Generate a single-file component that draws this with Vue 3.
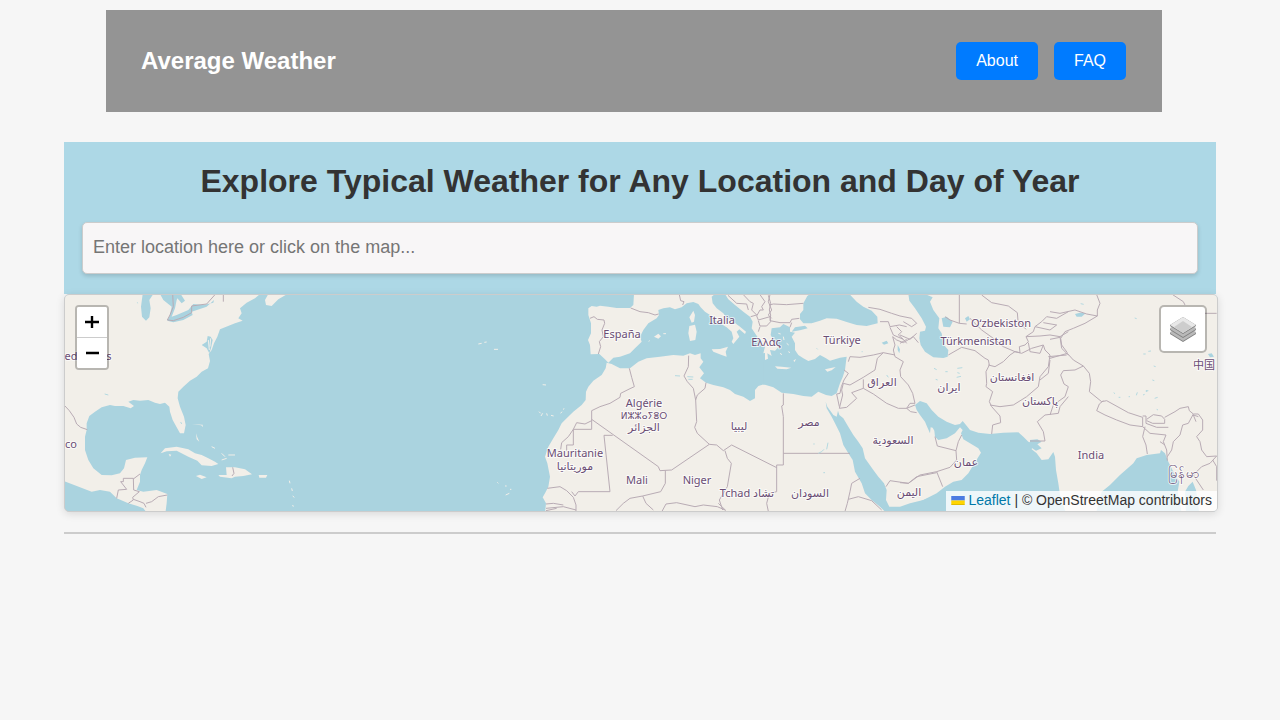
<script setup>
import { ref } from 'vue'

const query = ref('')

const labels = [
  { x: 71, y: 360, text: 'ed' },
  { x: 109, y: 360, text: 's' },
  { x: 71, y: 448, text: 'co' },
  { x: 622, y: 338, text: 'España' },
  { x: 722, y: 324, text: 'Italia' },
  { x: 766, y: 346, text: 'Ελλάς' },
  { x: 842, y: 344, text: 'Türkiye' },
  { x: 1001, y: 327, text: 'Oʻzbekiston' },
  { x: 976, y: 345, text: 'Türkmenistan' },
  { x: 1204, y: 369, text: '中国' },
  { x: 882, y: 386, text: 'العراق' },
  { x: 949, y: 391, text: 'ایران' },
  { x: 1012, y: 381, text: 'افغانستان' },
  { x: 1040, y: 405, text: 'پاکستان' },
  { x: 644, y: 407, text: 'Algérie' },
  { x: 644, y: 419, text: 'ⵍⵣⵣⴰⵢⴻⵔ', kind: 'narrow' },
  { x: 644, y: 431, text: 'الجزائر' },
  { x: 739, y: 430, text: 'ليبيا' },
  { x: 809, y: 426, text: 'مصر' },
  { x: 893, y: 444, text: 'السعودية' },
  { x: 966, y: 466, text: 'عمان' },
  { x: 575, y: 457, text: 'Mauritanie' },
  { x: 575, y: 470, text: 'موريتانيا' },
  { x: 637, y: 484, text: 'Mali' },
  { x: 697, y: 484, text: 'Niger' },
  { x: 747, y: 497, text: 'Tchad تشاد' },
  { x: 810, y: 497, text: 'السودان' },
  { x: 909, y: 496, text: 'اليمن' },
  { x: 1091, y: 459, text: 'India' },
  { x: 1184, y: 478, text: 'မြန်မာ', kind: 'wide' }
]
</script>

<template>
  <div class="page">
    <header class="top">
      <div class="brand">Average Weather</div>
      <nav class="links">
        <a href="#about">About</a>
        <a href="#faq">FAQ</a>
      </nav>
    </header>

    <main class="main">
      <section class="search">
        <h1>Explore Typical Weather for Any Location and Day of Year</h1>
        <input
          v-model="query"
          type="text"
          aria-label="Location"
          placeholder="Enter location here or click on the map..."
        />
      </section>

      <div class="map">
        <svg class="tiles" viewBox="65 295 1152 216" preserveAspectRatio="xMidYMid slice" role="img" aria-label="World map">
          <!-- North America -->
          <g transform="translate(60 290) scale(.33333)">
            <path class="land" d="M12 12H600L585 25 560 38 540 55 545 70 535 85 548 92 525 100 510 106 480 118 472 140 462 160 455 180 446 192 450 213 444 235 425 245 410 260 390 272 370 290 355 305 353 325 360 350 372 380 377 405 372 430 360 430 350 412 338 390 330 365 328 350 315 338 300 342 285 338 265 330 240 332 220 330 205 335 222 348 212 355 190 348 165 348 150 345 125 352 105 365 88 378 80 400 80 420 75 440 75 480 85 510 100 535 125 555 155 556 180 550 192 535 198 510 225 503 262 502 255 520 245 540 240 555 240 575 230 600 250 605 290 600 322 612 320 640 316 670H262L250 655 232 648 205 640 170 625 150 605 120 600 95 605 60 592 12 573Z" />
            <path class="land" d="M625 12H682L655 28 635 48 618 45 615 30Z" />
            <path class="land" d="M302 490 315 475 350 470 385 478 405 490 425 495 445 505 465 515 475 522 455 528 425 526 412 512 385 500 350 482 320 484ZM475 555 500 555 498 532 525 532 555 538 576 553 550 558 525 560 515 565 480 560ZM408 558 420 554 440 562 425 567ZM596 555H622L618 563H598ZM326 492 334 494 330 500ZM408 430 412 442 418 455 410 448ZM396 403 428 404 428 412 424 406Z" />
            <path class="isles" d="M455 470 465 475M485 490 495 500M505 495 525 495M485 510 500 505M688 572 690 580M695 595 697 603M698 618 703 622M698 645 700 650" />
            <path class="water" d="M248 12 243 50 246 80 258 92 268 82 272 55 268 30 280 12ZM300 12 310 30 335 50 330 75 322 92 340 97 370 90 398 75 395 65 440 50 462 30 460 38 430 45 400 42 385 60 350 75 335 80 345 55 350 30 352 25 365 40 375 32 362 12ZM425 165 440 155 443 138 452 140 458 150 453 175 448 190 440 175Z" />
            <path class="isles" d="M445 150 448 180M452 145 450 170" />
            <path class="border" d="M338 12 340 50 330 75 322 90 340 92 370 82 395 68 395 48 440 42 465 14M490 12V35M15 348 28 362 42 382 50 402 62 412 82 419M220 565H190V575H182L200 598 175 600 170 625M220 565 221 600M220 567 240 552M221 600 238 605 218 622 220 630 205 640M220 628 240 635 252 640 258 652M258 640 275 635 295 620 322 615M518 532 522 550 516 558" />
            <path class="lakes" d="M362 396 365 402M134 312 145 315M233 40 232 37" />
          </g>
          <!-- Atlantic isles -->
          <g transform="translate(440 290) scale(.33333)">
            <path class="isles" d="M115 162 125 160M133 157 140 156M162 178 174 178M308 284 318 285M297 365 302 370M303 378 308 370M320 370 322 377M333 376 341 378M362 370 366 365M369 358 373 356M172 577 175 580M195 588 200 588M210 598 214 598M197 615 208 610" />
          </g>
          <!-- Western Europe and North Africa -->
          <g transform="translate(580 290) scale(.33333)">
            <path class="land" d="M25 55 35 48 50 50 60 47 85 50 110 54 150 54 160 45 162 12H405L395 20 398 40 410 55 430 70 440 85 460 95 480 110 498 125 495 132 478 118 470 125 478 140 468 152 460 162 455 155 460 145 455 125 440 112 420 100 400 88 390 75 375 65 362 52 355 42 340 36 320 40 305 52 285 58 270 52 250 55 235 60 237 75 230 85 205 100 190 120 180 140 185 155 165 175 150 190 120 200 100 203 85 218 75 208 58 192 32 193 30 165 24 150 33 130 33 100 25 75Z" />
            <path class="land" d="M435 12 445 28 465 45 490 65 510 80 518 95 515 115 525 130 535 145 545 160 555 170 550 190 558 188 568 205 580 203 600 170V12Z" />
            <path class="land" d="M340 62 345 75 342 95 335 98 328 82ZM328 108 345 104 350 125 346 150 330 153 325 130ZM395 178 420 177 444 170 437 185 440 200 425 195 400 185ZM222 140 235 131 243 139 235 146Z" />
            <path class="isles" d="M206 154 209 152M250 131 258 131" />
            <path class="land" d="M80 218 95 222 120 235 150 235 175 215 200 205 240 200 280 195 310 197 330 190 345 195 362 190 362 205 370 215 358 232 372 250 360 265 378 278 400 285 430 292 450 300 465 312 490 320 510 333 525 325 525 300 535 288 555 282 575 288 605 294V670H-105L-102 640-112 622-105 610-95 590-90 560-98 520-105 500-95 470-80 445-65 420-55 400-40 385-20 365 5 345 17 330 18 305 25 290 40 272 65 255 77 235Z" />
          </g>
          <!-- Middle East, Caucasus, Horn -->
          <g transform="translate(740 290) scale(.33333)">
            <path class="land" d="M75 12H1435V670H75Z" />
            <path class="water" d="M95 115 120 112 130 102 150 112 150 125 165 128 155 140 165 160 165 180 175 195 190 205 205 213 225 207 240 195 258 205 270 212 285 208 300 203 320 200 318 215 315 240 308 262 300 280 290 310 275 318 258 315 235 305 215 320 190 318 160 312 125 308 100 292 75 284 70 284V212L84 206 82 190 95 198 90 180 105 182 115 172 100 150 92 135Z" />
            <path class="water" d="M190 60 190 40 202 18 210 12H328L350 35 370 50 395 62 412 80 413 100 380 108 350 105 320 96 290 86 260 85 240 92 215 100 190 100 180 88 180 72ZM165 112 195 107 203 115 180 121 155 125Z" />
            <path class="land" d="M105 229 125 230 154 233 140 238 112 236ZM255 238 287 231 275 241 262 245ZM160 212 168 206 164 216Z" />
            <path class="isles" d="M115 130 122 132M130 140 132 150M140 160 146 165M120 190 126 194M145 185 150 188" />
            <path class="water" d="M257 335 262 350 280 375 290 380 294 362 298 375 310 385 325 410 340 435 355 455 368 475 375 505 400 540 415 560 432 580 440 600 438 630 448 650 480 650 510 640 550 630 605 610V670H440L420 650 395 630 375 610 365 580 345 545 338 510 325 490 310 465 300 430 285 400 275 380 260 355Z" />
            <path class="border" d="M130 310V345L125 348 130 380V525H110V605L88 610 80 640 85 664M130 490H330M88 45 100 42 140 44 165 42 190 40M90 92 120 98 150 98 155 88 178 85M155 98 150 112M85 16 92 40 88 60 92 75 90 92M385 52 420 58 455 70 480 78 515 85 530 100 515 110 490 95M420 95 445 95 450 110 478 105 500 110M450 112 460 135 490 148M470 110 485 125 475 135 490 148 500 160M458 140 470 150 490 158 520 140 535 158M458 140 465 165 460 180 465 200 490 215 480 240 482 260 505 285 518 310 525 340M325 215 330 200 360 202 400 195 430 188 465 195M430 188 412 205 405 240 370 262 330 285 310 280M310 280 305 300 308 315 298 355M370 268V295L335 308 350 325 320 352 298 355M370 295 400 312 440 340 475 355 500 355 510 340 525 340M500 355 512 365 530 368M312 240 325 250 312 270 304 290 300 310 290 312 298 350M438 590 450 572 505 580 530 560 590 548M360 565 335 580 330 605 322 640 315 664M325 628 355 620 395 632 425 660" />
            <path class="water" d="M425 158 440 152 445 160 432 164ZM473 165 480 178 478 190 473 180Z" />
            <path class="lakes" d="M235 490 245 485 252 478M260 478 264 458M220 462 224 462M250 548 255 548M365 185 368 185M230 175 233 178M440 255 445 262" />
          </g>
          <!-- Borders of Western Europe, the Balkans and North Africa -->
          <g transform="translate(580 290) scale(.33333)">
            <path class="border" d="M30 85 42 80 52 88 72 90 74 100 66 120 70 140 58 155 62 170 55 192M152 54 180 65 205 68 225 75 236 72M298 14 302 32 312 35 308 45M148 235 155 262 163 290 150 296 122 310 120 322 90 340 60 350 35 362V418H-20V465H-40V482M35 392 15 402-10 398-20 418-35 440-55 458-58 478M35 388 235 530 240 542 275 540 388 463M326 197 325 230 312 258 322 275 340 295 347 330 350 395 344 412 352 430 388 463 410 465 430 482 455 465 590 533M378 278 375 295 352 315 347 330M72 436H98M72 436 90 605H-5L-15 618-25 605M256 542V580L242 605 188 618 198 640 220 660M188 618 150 625 130 640 108 662M246 664 258 642 290 638 345 650 370 645 412 650 435 660M435 482 442 505 454 520 442 590 418 630 428 660M415 640 438 662M-98 595-60 590-40 602-20 622-12 645V664M-102 642-80 640-50 645M-102 655-50 650-12 660M-102 662-70 655M444 16 470 40 500 42 505 60M490 14 510 35 520 40 515 60 530 75 512 80M540 14 555 35 545 50 550 60 540 60 530 78 535 90 570 80 572 95 560 108 540 108 535 92M570 14 565 35 575 60 565 75 575 85M540 110 535 125" />
            <path class="lakes" d="M285 257 300 258M322 260 340 261M325 268 338 268" />
          </g>
          <!-- Persia, Central Asia, Arabian Sea -->
          <g transform="translate(900 290) scale(.33333)">
            <path class="water" d="M25 12 28 32 45 55 65 85 78 110 75 122 60 125 58 145 62 165 75 185 100 202 130 204 143 200 145 180 132 165 128 148 125 130 115 115 118 85 100 60 90 35 98 22 75 12ZM125 85 140 80 158 95 150 112 130 110ZM195 85 205 78 210 88 200 95Z" />
            <path class="water" d="M45 345 60 333 80 340 95 360 115 380 140 395 165 405 180 402 188 393 198 405 210 420 235 428 270 432 310 428 355 427 370 440 385 455 400 460 395 478 410 490 425 510 445 508 460 486 465 500 468 540 475 580 480 615 498 670H0V655L30 648 70 630 110 610 135 590 160 575 185 570 205 550 220 525 243 488 235 475 210 460 190 448 183 430 188 420 180 412 165 430 140 445 115 450 105 440 103 422 98 413 92 412 90 430 82 412 75 395 60 375 50 360Z" />
            <path class="water" d="M390 450 412 448 425 455 412 463 425 475 408 482 390 470Z" />
            <path class="border" d="M178 14V100L200 102M178 100 150 90 135 80M145 195 185 172 225 182 255 205 265 210 268 225 258 245 260 280 258 290 278 305 268 335 275 350 300 378 302 398 278 405 275 432M245 15 275 38 325 48 352 68 354 92 378 118M210 85 245 120 280 145 310 170 345 185M265 225 285 230 310 215 330 195 345 185 365 190 395 175 430 165 435 180 450 195 445 230 420 260 415 290 380 320 340 345 300 350 270 345M345 185 360 188 358 170 375 165 385 155 378 140 400 125 405 110 425 95 440 80 470 85 505 65M378 140 420 138 450 135 480 140 505 125M385 158 390 185 420 190 430 165M405 110 450 120 470 105 430 98M445 200 500 195M480 140 485 175 505 195M450 210 445 250 420 270M390 453H435L430 425 412 395 435 375 475 370 480 350 505 320M105 440 112 468 168 482 175 455 185 435M168 482 170 510 150 532 110 545 60 555 25 580 0 578M110 545 128 590M20 355 45 345M0 135 30 148 50 130M0 160 20 148" />
            <path class="lakes" d="M102 235 110 239M136 245 143 245M172 235 187 233M170 262 183 259M107 268 113 270M172 248 179 250" />
          </g>
          <!-- India, Himalaya, Bay of Bengal -->
          <g transform="translate(1050 290) scale(.33333)">
            <path class="water" d="M155 605 180 585 210 555 250 520 260 505 290 495 330 490 333 480 345 490 355 515 370 545 388 575 383 605 395 670H138ZM405 605 415 588 428 575 438 600 448 670H408ZM75 72 90 68 107 70 95 80 80 80ZM474 192 485 190 492 200 480 202Z" />
            <path class="border" d="M140 14 150 40 142 60 142 78 105 100 70 115 45 125 32 145 35 165 52 188M0 65 30 70 75 60 110 72 142 78M0 148 30 142M0 205 52 190 70 210 100 228 118 250 122 275 118 305 155 335M100 228 75 240 40 242 32 255 42 282 55 290 45 320 10 345 0 375M155 335 170 332 235 368 278 382V410L240 405 200 390 165 375 140 362 148 342 160 332M278 378H288V400L320 412 355 412M290 388 310 374 335 378 344 388V400H308L290 392M344 382 375 365 390 355 415 350 418 362 430 372 445 372 458 390V420L440 440 450 455 455 480 470 500 500 498M430 372 415 400 398 405 390 435 370 455 365 480 352 500M285 410 278 440 288 465 292 492M278 410 300 430 348 435 340 455 350 480 352 512M330 455 345 465M500 498 480 520 455 530 430 555 460 600M488 510 500 530V572M368 14 400 35 405 45M440 70H500M438 395 430 375 445 380" />
            <path class="lakes" d="M254 84 260 86M92 41 101 43M295 184 303 183M280 192 287 192M287 303 295 302M290 300V306M314 325 323 322M279 315 284 313M262 307 259 316M236 320 240 320M191 308 195 311M206 322 211 322M307 270 313 272M311 228 317 230M320 358 324 360" />
          </g>
          <g class="labels">
            <text v-for="l in labels" :key="l.text" :class="l.kind" :x="l.x" :y="l.y">{{ l.text }}</text>
          </g>
        </svg>

        <div class="zoom">
          <button type="button" aria-label="Zoom in">
            <svg viewBox="0 0 14 14"><path d="M0 7H14M7 1V13" /></svg>
          </button>
          <button type="button" aria-label="Zoom out">
            <svg viewBox="0 0 14 14"><path d="M1 7H14" /></svg>
          </button>
        </div>

        <button class="layers" type="button" aria-label="Layers">
          <svg viewBox="0 0 26 26">
            <path fill="#808080" d="M0 17 13 9 26 17V18L13 26 0 18Z" />
            <path fill="#b9b9b9" d="M0 16 13 9 26 16V17L13 25 0 17Z" />
            <path fill="#808080" d="M0 13 13 5 26 13V14L13 22 0 14Z" />
            <path fill="#b9b9b9" d="M0 12 13 5 26 12V13L13 21 0 13Z" />
            <path fill="#808080" d="M0 9 13 1 26 9V10L13 18 0 10Z" />
            <path fill="#e8e8e8" d="M0 9 13 1 26 9 13 17Z" />
            <path fill="#cdcdcd" d="M4 11 13 5 22 11 13 17Z" />
          </svg>
        </button>

        <div class="credit">
          <a href="#leaflet"><svg class="flag" viewBox="0 0 12 8"><path fill="#4c7be1" d="M0 0H12V4H0Z" /><path fill="#ffd500" d="M0 4H12V7H0Z" /><path fill="#e0bc00" d="M0 7H12V8H0Z" /></svg> Leaflet</a>
          | © OpenStreetMap contributors
        </div>
      </div>

      <hr />
    </main>
  </div>
</template>

<style>
body {
  margin: 0;
  background: #f6f6f6;
}
</style>

<style scoped>
.page {
  display: flow-root;
  font-family: "Liberation Sans", Arial, sans-serif;
  color: #333;
}
.top {
  display: flex;
  align-items: center;
  justify-content: space-between;
  margin: 10px 118px 30px 106px;
  padding: 32px 36px 32px 35px;
  background: #949494;
}
.brand {
  font-size: 24px;
  font-weight: bold;
  color: #fff;
}
.links {
  display: flex;
  gap: 16px;
}
.links a {
  padding: 10px 20px;
  border-radius: 5px;
  background: #007bff;
  color: #fff;
  font-size: 16px;
  line-height: 18px;
  text-decoration: none;
}
.main {
  width: 90%;
  margin: 0 auto;
}
.search {
  padding: 20px 18px;
  background: #add8e6;
}
h1 {
  margin: 0 0 22px;
  font-size: 32px;
  line-height: 38px;
  text-align: center;
}
.search input {
  display: block;
  box-sizing: border-box;
  width: 100%;
  height: 52px;
  padding: 0 10px 2px;
  border: 1px solid #ccc;
  border-radius: 5px;
  background: #f8f6f7;
  box-shadow: 0 2px 4px rgba(0, 0, 0, 0.15);
  font: 18px "Liberation Sans", Arial, sans-serif;
}
.search input::placeholder {
  color: #757575;
}
.map {
  position: relative;
  width: 100%;
  height: 216px;
  overflow: hidden;
  border: 1px solid #ccc;
  border-radius: 5px;
  background: #aad3df;
  box-shadow: 0 2px 8px rgba(0, 0, 0, 0.12);
}
.tiles {
  display: block;
  width: 100%;
  height: 100%;
}
.land {
  fill: #f2efe9;
}
.water {
  fill: #aad3df;
}
.border,
.isles,
.lakes {
  fill: none;
  stroke: #b8abb4;
  stroke-width: 3;
  stroke-linejoin: round;
}
.isles {
  stroke: #f2efe9;
}
.lakes {
  stroke: #b4d9e0;
}
.labels {
  font-family: "Noto Sans", "DejaVu Sans", "Noto Sans CJK SC", sans-serif;
  font-size: 11px;
  text-anchor: middle;
  fill: #6a4d74;
  stroke: rgba(255, 255, 255, 0.7);
  stroke-width: 2px;
  stroke-linejoin: round;
  paint-order: stroke;
}
.labels .narrow {
  font-size: 9px;
}
.labels .wide {
  font-size: 13px;
}
.zoom {
  position: absolute;
  top: 10px;
  left: 10px;
  overflow: hidden;
  border: 2px solid rgba(0, 0, 0, 0.24);
  border-radius: 4px;
  background: #fff;
  background-clip: padding-box;
}
.zoom button {
  display: flex;
  align-items: center;
  justify-content: center;
  width: 30px;
  height: 30px;
  padding: 0;
  border: 0;
  background: #fff;
}
.zoom button + button {
  height: 31px;
  border-top: 1px solid #ccc;
}
.zoom svg {
  width: 14px;
  height: 14px;
  stroke: #000;
  stroke-width: 2.4;
}
.layers {
  position: absolute;
  top: 10px;
  right: 10px;
  display: flex;
  align-items: center;
  justify-content: center;
  width: 48px;
  height: 48px;
  padding: 0;
  border: 2px solid rgba(0, 0, 0, 0.24);
  border-radius: 5px;
  background: #fff;
  background-clip: padding-box;
}
.layers svg {
  width: 26px;
  height: 26px;
}
.credit {
  position: absolute;
  right: 0;
  bottom: 0;
  padding: 0 5px 2px;
  background: rgba(255, 255, 255, 0.8);
  font-size: 14px;
  line-height: 18px;
}
.credit a {
  color: #0078a8;
  text-decoration: none;
}
.flag {
  width: 14px;
  height: 9px;
}
hr {
  margin: 20px 0 0;
  border: 0;
  border-top: 2px solid #ccc;
}
</style>
